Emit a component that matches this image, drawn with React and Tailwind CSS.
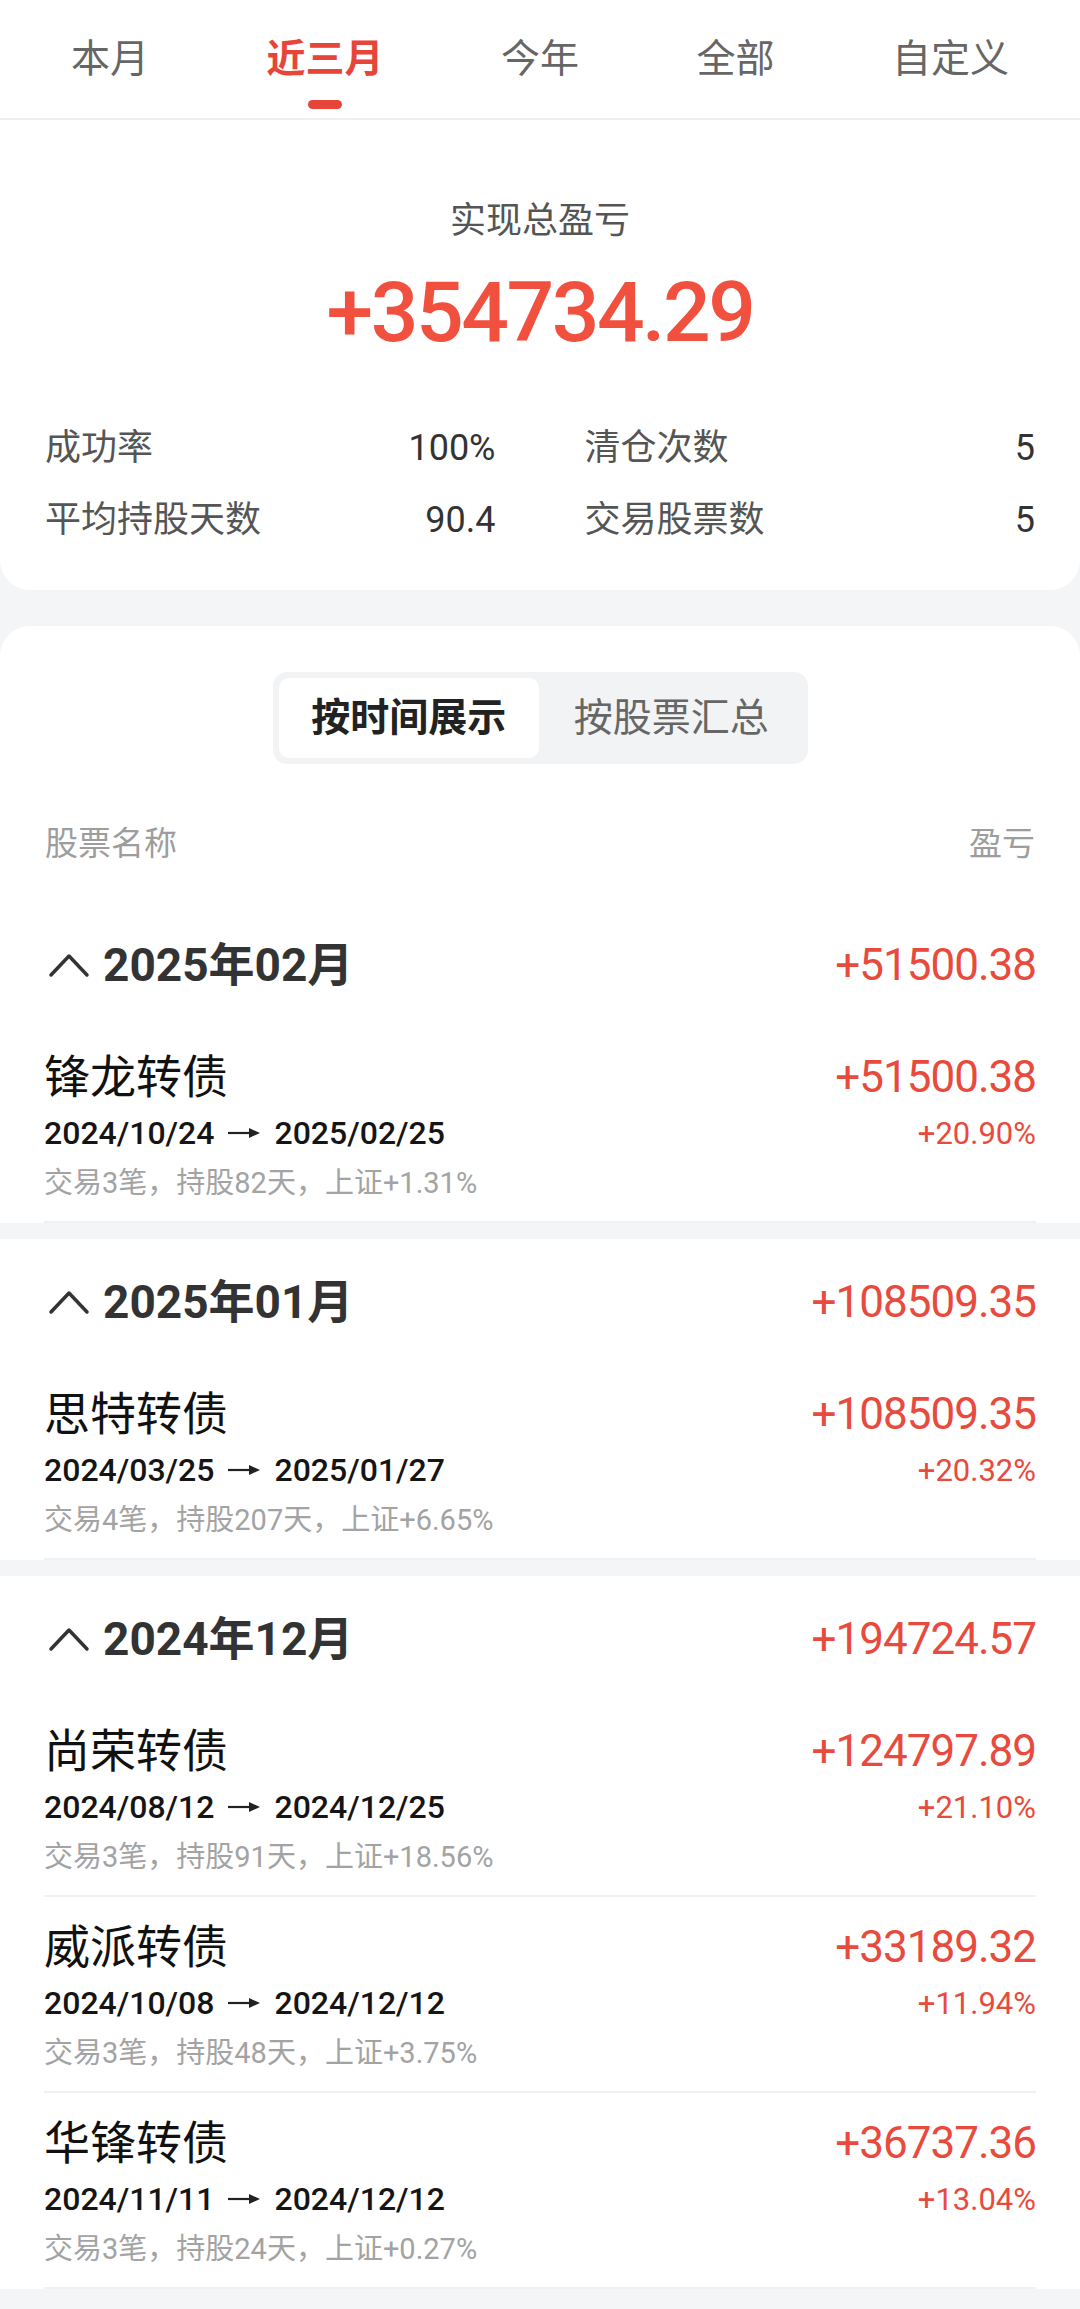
import { useState } from 'react';

const tabs = ['本月', '近三月', '今年', '全部', '自定义'];

const stats = [
    { label: '成功率', value: '100%' },
    { label: '清仓次数', value: '5' },
    { label: '平均持股天数', value: '90.4' },
    { label: '交易股票数', value: '5' },
];

const groups = [
    {
        month: '2025年02月',
        total: '+51500.38',
        items: [
            { name: '锋龙转债', amount: '+51500.38', from: '2024/10/24', to: '2025/02/25', pct: '+20.90%', note: '交易3笔，持股82天，上证+1.31%' },
        ],
    },
    {
        month: '2025年01月',
        total: '+108509.35',
        items: [
            { name: '思特转债', amount: '+108509.35', from: '2024/03/25', to: '2025/01/27', pct: '+20.32%', note: '交易4笔，持股207天，上证+6.65%' },
        ],
    },
    {
        month: '2024年12月',
        total: '+194724.57',
        items: [
            { name: '尚荣转债', amount: '+124797.89', from: '2024/08/12', to: '2024/12/25', pct: '+21.10%', note: '交易3笔，持股91天，上证+18.56%' },
            { name: '威派转债', amount: '+33189.32', from: '2024/10/08', to: '2024/12/12', pct: '+11.94%', note: '交易3笔，持股48天，上证+3.75%' },
            { name: '华锋转债', amount: '+36737.36', from: '2024/11/11', to: '2024/12/12', pct: '+13.04%', note: '交易3笔，持股24天，上证+0.27%' },
        ],
    },
];

function Chevron() {
    return (
        <svg width="42" height="28" viewBox="0 0 42 28" fill="none" className="ml-[4px] shrink-0">
            <polyline points="3,24 21,5 39,24" stroke="#333" strokeWidth="3.5" strokeLinecap="round" strokeLinejoin="round" />
        </svg>
    );
}

function Arrow() {
    return (
        <svg width="32" height="14" viewBox="0 0 32 14" className="shrink-0">
            <line x1="0" y1="7" x2="24" y2="7" stroke="#222" strokeWidth="2.2" />
            <polygon points="21,2 32,7 21,12" fill="#222" />
        </svg>
    );
}

function StockRow({ item }) {
    return (
        <div className="mx-[44px] pt-[24px] pb-[16px] border-b-2 border-[#f1f1f1]">
            <div className="h-[52px] flex items-center justify-between">
                <span className="text-[46px] leading-none text-[#111]">{item.name}</span>
                <span className="text-[44px] leading-none text-[#e84a3d] tracking-[-1px]">{item.amount}</span>
            </div>
            <div className="mt-[4px] h-[52px] flex items-center justify-between">
                <div className="flex items-center gap-[14px] text-[32px] leading-none font-medium text-[#151515]">
                    <span>{item.from}</span>
                    <Arrow />
                    <span>{item.to}</span>
                </div>
                <span className="text-[31px] leading-none text-[#e84a3d]">{item.pct}</span>
            </div>
            <div className="mt-[2px] h-[44px] flex items-center text-[29px] leading-none text-[#a3a3a3]">
                {item.note}
            </div>
        </div>
    );
}

export default function App() {
    const [active, setActive] = useState(1);
    const [mode, setMode] = useState(0);

    return (
        <div className="min-h-screen bg-[#f4f5f7] pb-[40px] font-['Roboto','Noto_Sans_CJK_SC',sans-serif]">
            {/* period tabs */}
            <div className="h-[120px] bg-white border-b-2 border-[#f0f0f0] flex justify-between px-[71px]">
                {tabs.map((t, i) => (
                    <button
                        key={t}
                        type="button"
                        onClick={() => setActive(i)}
                        className="relative h-full flex items-center justify-center"
                    >
                        <span className={i === active ? 'text-[39px] leading-none font-bold text-[#e8453a]' : 'text-[39px] leading-none text-[#666]'}>
                            {t}
                        </span>
                        {i === active && (
                            <span className="absolute bottom-[9px] left-1/2 -translate-x-1/2 w-[34px] h-[9px] rounded-full bg-[#e8453a]"></span>
                        )}
                    </button>
                ))}
            </div>

            {/* summary */}
            <div className="bg-white rounded-b-[30px] pt-[76px] pb-[40px]">
                <div className="h-[50px] flex items-center justify-center text-[36px] leading-none text-[#555]">实现总盈亏</div>
                <div className="mt-[17px] h-[100px] flex items-center justify-center text-[84px] leading-none font-medium tracking-[-2.5px] text-[#f2503f]">
                    +354734.29
                </div>
                <div className="mt-[55px] grid grid-cols-2 gap-x-[89px] gap-y-[12px] px-[45px]">
                    {stats.map((s) => (
                        <div key={s.label} className="h-[60px] flex items-center justify-between">
                            <span className="text-[36px] leading-none text-[#555]">{s.label}</span>
                            <span className="text-[36px] leading-none text-[#333]">{s.value}</span>
                        </div>
                    ))}
                </div>
            </div>

            {/* list */}
            <div className="mt-[36px] bg-white rounded-t-[30px] pt-[46px] pb-[34px]">
                <div className="mx-auto w-[535px] h-[92px] p-[6px] bg-[#f2f3f5] rounded-[14px] grid grid-cols-2 gap-[2px]">
                    {['按时间展示', '按股票汇总'].map((m, i) => (
                        <button
                            key={m}
                            type="button"
                            onClick={() => setMode(i)}
                            className={i === mode ? 'rounded-[10px] bg-white flex items-center justify-center text-[39px] leading-none font-bold text-[#222]' : 'rounded-[10px] flex items-center justify-center text-[39px] leading-none text-[#666]'}
                        >
                            {m}
                        </button>
                    ))}
                </div>
                <div className="mt-[54px] h-[50px] px-[45px] flex items-center justify-between text-[33px] leading-none text-[#9d9d9d]">
                    <span>股票名称</span>
                    <span>盈亏</span>
                </div>
            </div>

            {groups.map((g, gi) => (
                <div key={g.month} className={gi > 0 ? 'mt-[16px] bg-white' : 'bg-white'}>
                    <div className="h-[125px] px-[44px] flex items-center justify-between">
                        <div className="flex items-center gap-[13px]">
                            <Chevron />
                            <span className="text-[46px] leading-none font-bold text-[#333]">{g.month}</span>
                        </div>
                        <span className="text-[44px] leading-none text-[#e84a3d] tracking-[-1px]">{g.total}</span>
                    </div>
                    {g.items.map((item) => (
                        <StockRow key={item.name} item={item} />
                    ))}
                </div>
            ))}
        </div>
    );
}
